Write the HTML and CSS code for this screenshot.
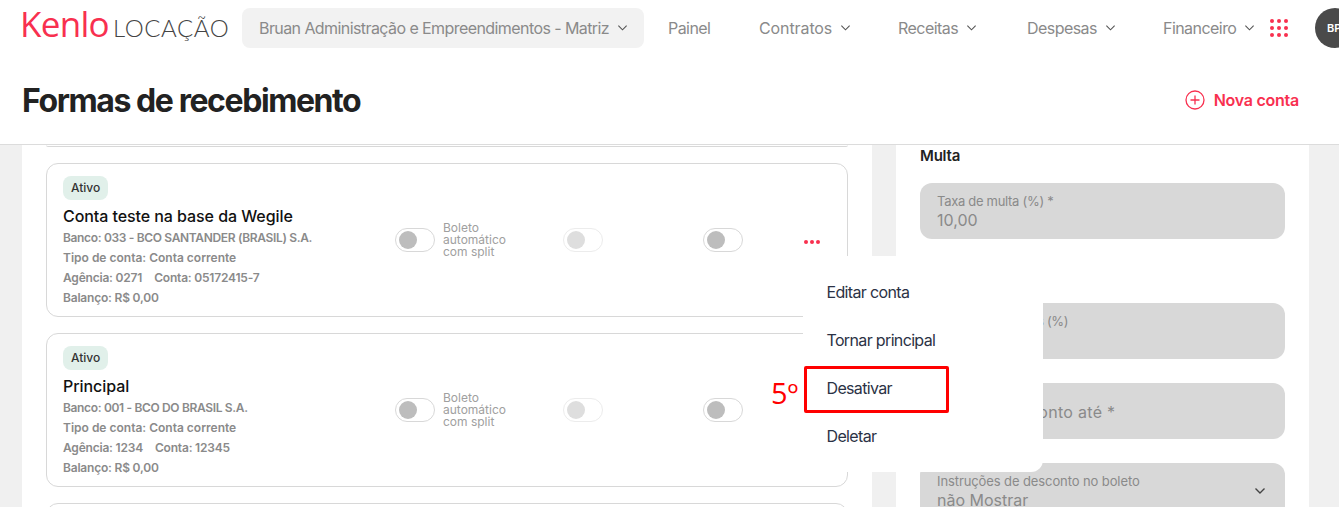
FILE: index.html
```html
<!DOCTYPE html>
<html>
<head>
    <title>Formas de recebimento | Kenlo Locação</title>
    <link rel="stylesheet" href="styles.css">
</head>
<body>
    <div class="topbar">
        <div class="navbar">
            <span class="logo"><span class="logo-brand">Kenlo</span><span class="logo-product">LOCAÇÃO</span></span>
            <button class="unit-select">Bruan Administração e Empreendimentos - Matriz
                <svg class="chevron" viewBox="0 0 12 8"><path d="M1.5 1.5 6 6l4.5-4.5"/></svg>
            </button>
            <a class="nav-link nav-painel">Painel</a>
            <a class="nav-link nav-contratos">Contratos
                <svg class="chevron" viewBox="0 0 12 8"><path d="M1.5 1.5 6 6l4.5-4.5"/></svg>
            </a>
            <a class="nav-link nav-receitas">Receitas
                <svg class="chevron" viewBox="0 0 12 8"><path d="M1.5 1.5 6 6l4.5-4.5"/></svg>
            </a>
            <a class="nav-link nav-despesas">Despesas
                <svg class="chevron" viewBox="0 0 12 8"><path d="M1.5 1.5 6 6l4.5-4.5"/></svg>
            </a>
            <a class="nav-link nav-financeiro">Financeiro
                <svg class="chevron" viewBox="0 0 12 8"><path d="M1.5 1.5 6 6l4.5-4.5"/></svg>
            </a>
            <svg class="apps-icon" viewBox="0 0 18 18">
                <circle cx="2" cy="2" r="2"/><circle cx="9" cy="2" r="2"/><circle cx="16" cy="2" r="2"/>
                <circle cx="2" cy="9" r="2"/><circle cx="9" cy="9" r="2"/><circle cx="16" cy="9" r="2"/>
                <circle cx="2" cy="16" r="2"/><circle cx="9" cy="16" r="2"/><circle cx="16" cy="16" r="2"/>
            </svg>
            <span class="avatar">BP</span>
        </div>
        <div class="title-row">
            <h1>Formas de recebimento</h1>
            <a class="new-account">
                <svg class="plus-icon" viewBox="0 0 20 20"><circle cx="10" cy="10" r="9"/><path d="M10 5.5v9M5.5 10h9"/></svg>
                Nova conta
            </a>
        </div>
    </div>

    <div class="content-area">
        <div class="accounts-panel">
            <div class="card-stub"></div>

            <div class="account-card">
                <div class="account-info">
                    <span class="status-badge">Ativo</span>
                    <h3>Conta teste na base da Wegile</h3>
                    <p class="bank-line">Banco: 033 - BCO SANTANDER (BRASIL) S.A.</p>
                    <p class="type-line">Tipo de conta: Conta corrente</p>
                    <p><span class="agency">Agência: 0271</span>Conta: 05172415-7</p>
                    <p>Balanço: R$ 0,00</p>
                </div>
                <div class="option option-split">
                    <span class="toggle"></span>
                    <span class="option-label">Boleto automático com split</span>
                </div>
                <div class="option option-second"><span class="toggle toggle-disabled"></span></div>
                <div class="option option-third"><span class="toggle"></span></div>
                <div class="more-dots"><i></i><i></i><i></i></div>
            </div>

            <div class="account-card">
                <div class="account-info">
                    <span class="status-badge">Ativo</span>
                    <h3>Principal</h3>
                    <p class="bank-line">Banco: 001 - BCO DO BRASIL S.A.</p>
                    <p class="type-line">Tipo de conta: Conta corrente</p>
                    <p><span class="agency">Agência: 1234</span>Conta: 12345</p>
                    <p>Balanço: R$ 0,00</p>
                </div>
                <div class="option option-split">
                    <span class="toggle"></span>
                    <span class="option-label">Boleto automático com split</span>
                </div>
                <div class="option option-second"><span class="toggle toggle-disabled"></span></div>
                <div class="option option-third"><span class="toggle"></span></div>
                <div class="more-dots"><i></i><i></i><i></i></div>
            </div>

            <div class="account-card"></div>
        </div>

        <div class="settings-panel">
            <h4>Multa</h4>
            <div class="field">
                <label>Taxa de multa (%) *</label>
                <span class="field-value">10,00</span>
            </div>
            <h4 class="heading-juros">Juros</h4>
            <div class="field field-juros">
                <label>Taxa de juros mês (%)</label>
            </div>
            <div class="field field-placeholder">Dias de desconto até *</div>
            <div class="field field-select">
                <label>Instruções de desconto no boleto</label>
                <span class="field-value">não Mostrar</span>
                <svg class="select-chevron" viewBox="0 0 12 8"><path d="M1.5 1.5 6 6l4.5-4.5"/></svg>
            </div>
        </div>
    </div>

    <div class="action-menu">
        <a>Editar conta</a>
        <a>Tornar principal</a>
        <a>Desativar</a>
        <a>Deletar</a>
    </div>
    <div class="step-box"></div>
    <span class="step-number">5º</span>
</body>
</html>
```

FILE: styles.css
```css
html, body {
    height: 507px;
    overflow: hidden;
}
body {
    font-family: Inter, "Noto Sans", sans-serif;
    margin: 0;
    padding: 0;
    background-color: #f0f0f0;
    color: #222;
}
.topbar {
    height: 144px;
    background-color: #fff;
    border-bottom: 1px solid #dcdcdc;
}
.navbar {
    display: flex;
    align-items: center;
    height: 40px;
    padding: 8px 0 0 22px;
    white-space: nowrap;
}
.navbar > * {
    flex: none;
}
.logo {
    display: flex;
    align-items: baseline;
    width: 220px;
    padding-bottom: 8px;
}
.logo-brand {
    font-family: "Open Sans", sans-serif;
    font-size: 35px;
    font-weight: 400;
    letter-spacing: -0.7px;
    margin-left: -2px;
    color: #f8304f;
    line-height: 40px;
}
.logo-product {
    font-family: Lato, sans-serif;
    font-size: 24px;
    font-weight: 300;
    letter-spacing: 0.6px;
    color: #444;
    margin-left: 4px;
}
.unit-select {
    display: flex;
    align-items: center;
    gap: 8px;
    width: 402px;
    height: 40px;
    padding: 0 0 0 17px;
    border: none;
    border-radius: 8px;
    background-color: #f2f2f2;
    color: #8a8a8a;
    font-family: inherit;
    font-size: 16px;
    letter-spacing: -0.58px;
}
.chevron {
    width: 11px;
    height: 8px;
    fill: none;
    stroke: #555;
    stroke-width: 1.2;
}
.nav-link {
    display: flex;
    align-items: center;
    gap: 8px;
    font-size: 16px;
    letter-spacing: -0.55px;
    color: #8a8a8a;
}
.nav-painel {
    margin-left: 24px;
    width: 91px;
}
.nav-contratos {
    width: 139px;
    letter-spacing: -0.1px;
}
.nav-receitas {
    width: 129px;
}
.nav-despesas {
    width: 136px;
}
.nav-financeiro {
    width: 107px;
}
.apps-icon {
    width: 18px;
    height: 18px;
    fill: #f8304f;
}
.avatar {
    width: 40px;
    height: 40px;
    margin-left: 27px;
    border-radius: 50%;
    background-color: #4a4a4a;
    color: #fff;
    font-size: 11px;
    font-weight: 600;
    line-height: 40px;
    text-indent: 12px;
}
.title-row {
    display: flex;
    align-items: center;
    justify-content: space-between;
    height: 56px;
    padding: 24px 40px 0 22px;
}
h1 {
    margin: 0;
    font-size: 32px;
    font-weight: 700;
    letter-spacing: -1.42px;
    color: #222;
}
.new-account {
    display: flex;
    align-items: center;
    gap: 9px;
    font-size: 16px;
    font-weight: 600;
    letter-spacing: -0.25px;
    color: #f8304f;
}
.plus-icon {
    width: 20px;
    height: 20px;
    margin-left: -1px;
    fill: none;
    stroke: #f8304f;
    stroke-width: 1.3;
}
.content-area {
    display: flex;
    gap: 24px;
    padding-left: 22px;
}
.accounts-panel {
    width: 802px;
    height: 362px;
    padding: 0 24px;
    overflow: hidden;
    background-color: #fff;
}
.card-stub {
    height: 1px;
    margin-bottom: 16px;
    border-bottom: 1px solid #d8d8d8;
    border-radius: 0 0 12px 12px;
}
.account-card {
    display: flex;
    align-items: center;
    box-sizing: border-box;
    height: 154px;
    margin-bottom: 16px;
    padding-left: 16px;
    border: 1px solid #d8d8d8;
    border-radius: 12px;
}
.account-info {
    width: 332px;
    padding-top: 4px;
}
.status-badge {
    display: inline-block;
    padding: 0 8px;
    border-radius: 8px;
    background-color: #e1f0ea;
    color: #333;
    font-size: 12px;
    font-weight: 500;
    line-height: 24px;
}
.account-info h3 {
    margin: 4px 0 0;
    font-size: 16px;
    font-weight: 500;
    letter-spacing: -0.07px;
    line-height: 24px;
    color: #111;
}
.account-info p {
    margin: 0;
    font-size: 12px;
    font-weight: 600;
    letter-spacing: -0.2px;
    line-height: 20px;
    color: #8a8a8a;
}
.account-info .bank-line {
    letter-spacing: -0.34px;
}
.account-info .type-line {
    letter-spacing: 0;
}
.agency {
    margin-right: 12px;
}
.option {
    display: flex;
    align-items: center;
}
.option-split {
    width: 168px;
}
.option-second {
    width: 140px;
}
.option-third {
    width: 100px;
}
.option-label {
    width: 76px;
    margin-left: 8px;
    font-size: 12px;
    letter-spacing: 0;
    line-height: 12px;
    color: #a0a0a0;
}
.toggle {
    position: relative;
    flex: none;
    box-sizing: border-box;
    width: 40px;
    height: 24px;
    border: 1px solid #d8d8d8;
    border-radius: 12px;
    background-color: #fff;
}
.toggle::after {
    content: "";
    position: absolute;
    left: 3px;
    top: 2px;
    width: 18px;
    height: 18px;
    border-radius: 50%;
    background-color: #bdbdbd;
}
.toggle-disabled {
    border-color: #ececec;
}
.toggle-disabled::after {
    background-color: #dedede;
}
.more-dots {
    display: flex;
    gap: 2px;
    margin: 3px 0 0 1px;
}
.more-dots i {
    width: 4px;
    height: 4px;
    border-radius: 50%;
    background-color: #f8304f;
}
.settings-panel {
    width: 365px;
    height: 362px;
    padding: 0 24px;
    overflow: hidden;
    background-color: #fff;
}
h4 {
    margin: 0;
    font-size: 15px;
    font-weight: 600;
    letter-spacing: -0.2px;
    line-height: 20px;
    color: #222;
    padding-top: 1px;
}
.field {
    position: relative;
    display: flex;
    flex-direction: column;
    justify-content: center;
    box-sizing: border-box;
    height: 56px;
    margin-top: 17px;
    padding: 0 16px 0 17px;
    border-radius: 12px;
    background-color: #d8d8d8;
    color: #8a8a8a;
}
.field label {
    font-size: 13px;
    letter-spacing: -0.3px;
    line-height: 18px;
}
.field-value {
    font-size: 16px;
    line-height: 20px;
}
.heading-juros {
    margin-top: 27px;
}
.field-juros {
    justify-content: flex-start;
    margin-top: 16px;
    padding-top: 9px;
}
.field-placeholder {
    margin-top: 24px;
    padding-top: 2px;
    font-size: 16px;
    letter-spacing: 0.3px;
}
.field-select {
    margin-top: 24px;
}
.field-select label {
    letter-spacing: -0.1px;
}
.select-chevron {
    position: absolute;
    right: 19px;
    top: 24px;
    width: 12px;
    height: 8px;
    fill: none;
    stroke: #444;
    stroke-width: 1.4;
}
.action-menu {
    position: absolute;
    left: 803px;
    top: 256px;
    display: flex;
    flex-direction: column;
    box-sizing: border-box;
    width: 240px;
    height: 216px;
    padding: 12px 0;
    border-radius: 12px;
    background-color: #fff;
}
.action-menu a {
    height: 48px;
    padding-left: 23.5px;
    font-size: 16px;
    letter-spacing: -0.65px;
    line-height: 48px;
    color: #2b3245;
}
.step-box {
    position: absolute;
    left: 804px;
    top: 366px;
    width: 139px;
    height: 41px;
    border: 3px solid #f00;
    border-radius: 2px;
}
.step-number {
    position: absolute;
    left: 771px;
    top: 373px;
    font-family: "Open Sans", sans-serif;
    font-size: 29px;
    line-height: 40px;
    color: #f00;
}
```
